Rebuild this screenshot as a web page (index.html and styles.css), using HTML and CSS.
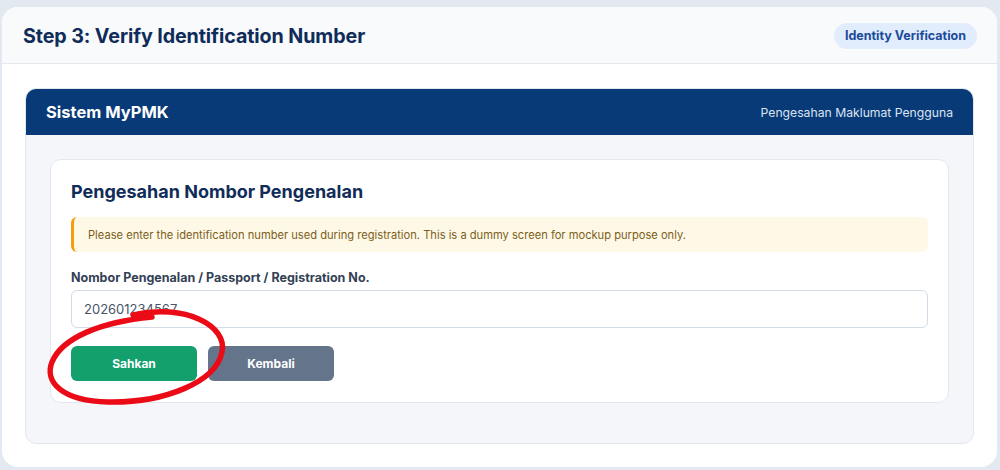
FILE: index.html
```html
<!DOCTYPE html>
<html>
<head>
<meta charset="utf-8">
<link rel="stylesheet" href="styles.css">
</head>
<body>
<div class="page">
  <div class="shell">
    <div class="shell-head">
      <h1 class="step-title">Step 3: Verify Identification Number</h1>
      <span class="badge">Identity Verification</span>
    </div>
    <div class="shell-body">
      <div class="panel">
        <div class="panel-head">
          <span class="brand">Sistem MyPMK</span>
          <span class="panel-sub">Pengesahan Maklumat Pengguna</span>
        </div>
        <div class="panel-body">
          <div class="card">
            <h2 class="card-title">Pengesahan Nombor Pengenalan</h2>
            <div class="alert">Please enter the identification number used during registration. This is a dummy screen for mockup purpose only.</div>
            <label class="field-label">Nombor Pengenalan / Passport / Registration No.</label>
            <div class="input">202601234567</div>
            <div class="actions">
              <button class="btn btn-primary">Sahkan</button>
              <button class="btn btn-secondary">Kembali</button>
              <svg class="annot" viewBox="0 0 1000 470" width="1000" height="470">
                <path d="M 133 315 C 185 303, 228 326, 222 352 C 216 382, 165 403, 108 402 C 62 401, 44 382, 52 362 C 62 338, 100 322, 152 317" fill="none" stroke="#ea0b16" stroke-width="5.5" stroke-linecap="round"/>
              </svg>
            </div>
          </div>
        </div>
      </div>
    </div>
  </div>
</div>
</body>
</html>
```

FILE: styles.css
```css
* { box-sizing: border-box; }
html, body { margin: 0; padding: 0; }
body {
  background: #e3e9f1;
  font-family: Inter, "Noto Sans", "Liberation Sans", sans-serif;
  width: 1000px;
  height: 470px;
  overflow: hidden;
}
.page {
  padding: 7px 3px 0 2px;
}
.shell {
  background: #ffffff;
  border-radius: 16px;
  height: 460px;
  overflow: hidden;
}
.shell-head {
  height: 57px;
  background: #f8fafc;
  border-bottom: 1px solid #e4e9f0;
  display: flex;
  align-items: center;
  justify-content: space-between;
  padding: 2px 20px 0 21px;
}
.step-title {
  margin: 0;
  font-size: 19.7px;
  font-weight: 700;
  color: #0f2c59;
  letter-spacing: -0.1px;
}
.badge {
  background: #e1ecfd;
  color: #1b4b9a;
  font-weight: 700;
  font-size: 12.5px;
  padding: 6px 11px;
  border-radius: 14px;
  line-height: 14px;
}
.shell-body {
  padding: 24px 23px 0 23px;
}
.panel {
  background: #f4f6fa;
  border: 1px solid #e1e7ef;
  border-radius: 11px;
  overflow: hidden;
  height: 356px;
}
.panel-head {
  background: #083a77;
  height: 46px;
  display: flex;
  align-items: center;
  justify-content: space-between;
  padding: 0 20px 0 20px;
}
.brand {
  color: #ffffff;
  font-weight: 700;
  font-size: 16.5px;
}
.panel-sub {
  color: #dbe4f1;
  font-size: 12.2px;
}
.panel-body {
  padding: 24px 24px 0 24px;
}
.card {
  background: #ffffff;
  border: 1px solid #e2e8f0;
  border-radius: 11px;
  padding: 20px 20px 20px 20px;
  height: 244px;
}
.card-title {
  margin: 0 0 13px 0;
  font-size: 18px;
  font-weight: 700;
  color: #102c58;
  line-height: 24px;
}
.alert {
  background: #fef8e6;
  border-left: 3px solid #f59e0b;
  border-radius: 6px;
  height: 35px;
  display: flex;
  align-items: center;
  padding-left: 14px;
  font-size: 11.15px;
  color: #7c5e1c;
}
.field-label {
  display: block;
  margin-top: 18px;
  font-size: 12.5px;
  font-weight: 700;
  color: #334155;
  line-height: 16px;
}
.input {
  margin-top: 4px;
  height: 38px;
  border: 1px solid #d3dbe6;
  border-radius: 6px;
  display: flex;
  align-items: center;
  padding-left: 12px;
  font-size: 13px;
  color: #475569;
}
.actions {
  margin-top: 18px;
  display: flex;
  gap: 11px;
  position: relative;
}
.btn {
  width: 126px;
  height: 35px;
  border: none;
  border-radius: 6px;
  color: #ffffff;
  font-family: Inter, "Noto Sans", "Liberation Sans", sans-serif;
  font-weight: 700;
  font-size: 12px;
}
.btn-primary { background: #13a06d; }
.btn-secondary { background: #64748b; }
.annot {
  position: absolute;
  left: -71px;
  top: -346px;
  pointer-events: none;
}
```
